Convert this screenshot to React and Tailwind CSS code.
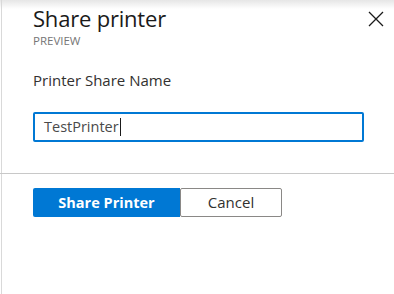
export default function App() {
  return (
    <div
      className="relative w-[394px] h-[294px] bg-white overflow-hidden"
      style={{ fontFamily: '"Open Sans", "Noto Sans", sans-serif' }}
    >
      <div className="absolute left-0 top-0 w-full h-[9px] bg-gradient-to-b from-[#e6e6e6] to-white" />
      <div className="absolute left-[1px] top-0 w-px h-full bg-[#d9d9d9]" />
      <div className="relative flex flex-col">
        <div className="flex justify-between pl-[33px] pr-[10px] pt-[3px]">
          <div className="flex flex-col">
            <div className="text-[22px] leading-[30px] text-[#1a1a1a] tracking-[-0.2px]">Share printer</div>
            <div className="text-[11.5px] leading-[14px] text-[#767676] mt-[1px]">PREVIEW</div>
          </div>
          <svg width="16" height="16" viewBox="0 0 16 16" className="mt-[8px]">
            <path d="M1 1L15 15M15 1L1 15" stroke="#1a1a1a" strokeWidth="1.3" />
          </svg>
        </div>
        <div className="pl-[33px] mt-[22px] text-[15px] leading-[20px] text-[#323130]">Printer Share Name</div>
        <div className="pl-[33px] mt-[22px]">
          <div className="w-[331px] h-[30px] border-2 border-[#0078d4] rounded-[2px] flex items-center pl-[9px] text-[14.5px] text-[#4a4a4a]">
            TestPrinter<span className="w-px h-[18px] bg-[#1a1a1a] ml-[1px]" />
          </div>
        </div>
        <div className="mt-[31px] h-px bg-[#c8c8c8] w-full" />
        <div className="pl-[33px] mt-[14px] flex">
          <div className="w-[147px] h-[29px] bg-[#0078d4] text-white font-bold text-[14.5px] flex items-center justify-center rounded-l-[2px]">
            Share Printer
          </div>
          <div className="w-[102px] h-[29px] border border-[#8a8886] text-[#323130] text-[15px] flex items-center justify-center rounded-[2px]">
            Cancel
          </div>
        </div>
      </div>
    </div>
  );
}
